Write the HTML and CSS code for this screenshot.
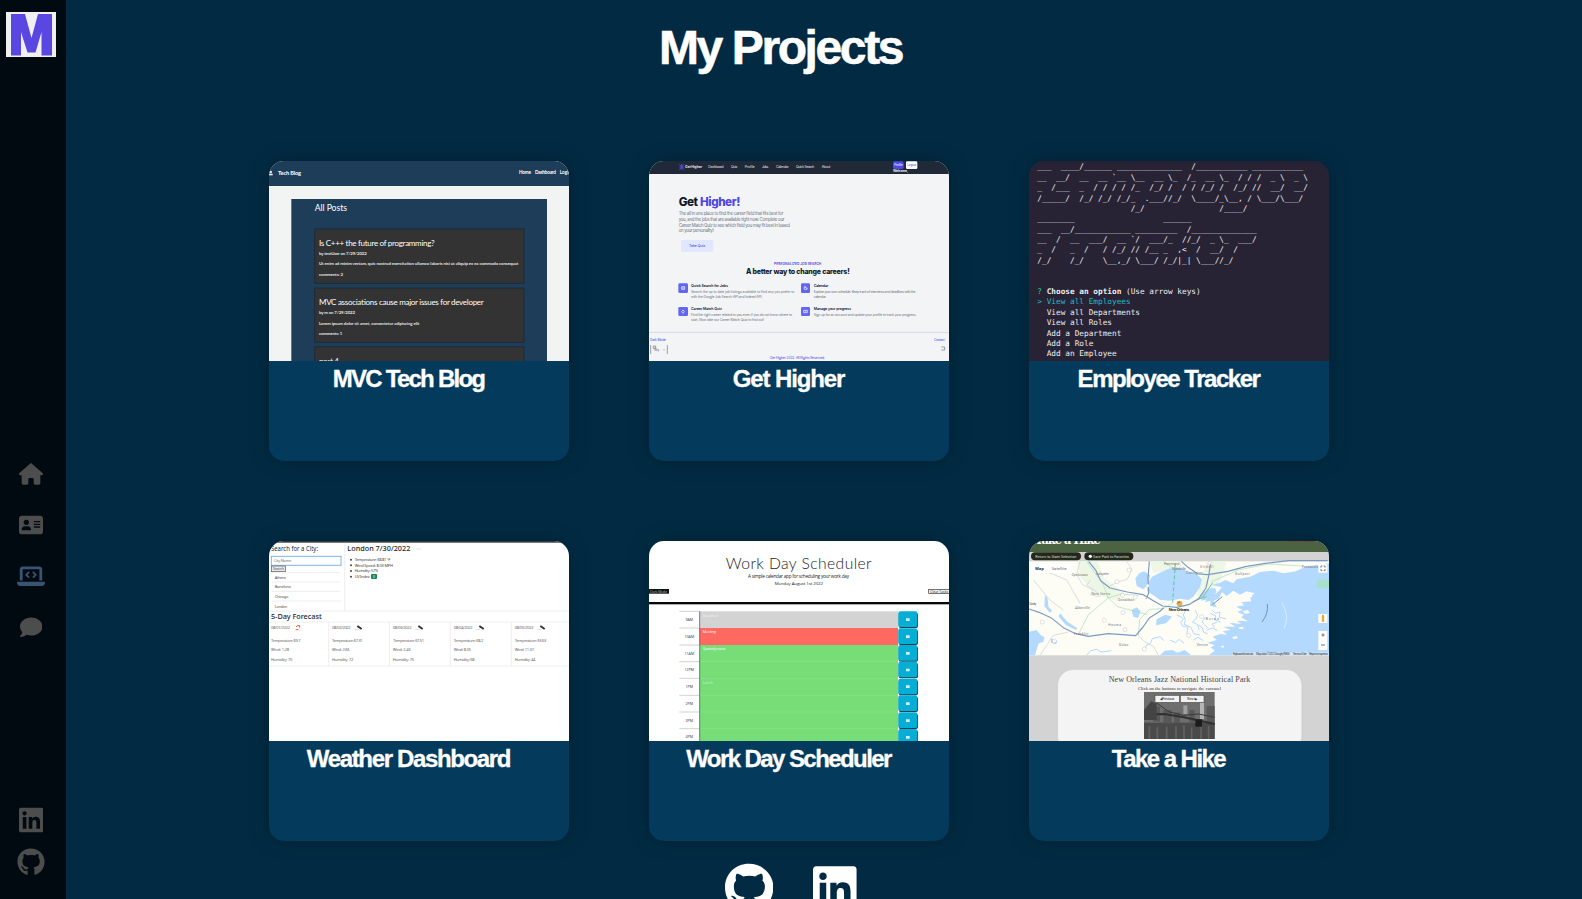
FILE: index.html
```html
<!DOCTYPE html>
<html lang="en">
<head>
<meta charset="utf-8">
<title>My Projects</title>
<link rel="stylesheet" href="styles.css">
</head>
<body>
<svg class="defs" aria-hidden="true">
  <symbol id="github" viewBox="0 0 496 512"><path d="M165.900 397.400c0 2-2.300 3.600-5.200 3.600-3.300.3-5.600-1.300-5.600-3.600 0-2 2.300-3.600 5.200-3.600 3-.3 5.600 1.300 5.600 3.600zm-31.100-4.500c-.7 2 1.300 4.300 4.300 4.900 2.600 1 5.600 0 6.200-2s-1.300-4.300-4.300-5.200c-2.600-.7-5.500.3-6.200 2.300zm44.200-1.700c-2.900.7-4.900 2.600-4.600 4.900.3 2 2.900 3.300 5.900 2.600 2.900-.7 4.900-2.600 4.600-4.600-.3-1.900-3-3.200-5.900-2.900zM244.800 8C106.100 8 0 113.300 0 252c0 110.900 69.800 205.800 169.500 239.200 12.800 2.300 17.300-5.600 17.300-12.100 0-6.200-.3-40.400-.3-61.400 0 0-70 15-84.700-29.800 0 0-11.400-29.100-27.800-36.600 0 0-22.900-15.700 1.600-15.400 0 0 24.900 2 38.600 25.800 21.900 38.600 58.600 27.500 72.900 20.900 2.300-16 8.800-27.100 16-33.700-55.900-6.200-112.300-14.300-112.300-110.500 0-27.500 7.600-41.300 23.600-58.900-2.600-6.500-11.100-33.300 2.600-67.900 20.900-6.500 69 27 69 27 20-5.600 41.500-8.500 62.800-8.500s42.800 2.900 62.800 8.500c0 0 48.100-33.600 69-27 13.700 34.700 5.200 61.400 2.600 67.900 16 17.700 25.800 31.500 25.800 58.900 0 96.500-58.900 104.200-114.800 110.500 9.200 7.900 17 22.900 17 46.400 0 33.700-.3 75.400-.3 83.600 0 6.500 4.600 14.400 17.300 12.100C428.200 457.800 496 362.900 496 252 496 113.300 383.500 8 244.800 8z"/></symbol>
  <symbol id="linkedin" viewBox="0 0 448 512"><path d="M416 32H31.900C14.300 32 0 46.500 0 64.300v383.400C0 465.500 14.300 480 31.900 480H416c17.600 0 32-14.500 32-32.300V64.300c0-17.800-14.400-32.300-32-32.300zM135.400 416H69V202.200h66.500V416zm-33.200-243c-21.300 0-38.500-17.300-38.500-38.500S80.900 96 102.200 96c21.200 0 38.500 17.300 38.500 38.500 0 21.300-17.200 38.500-38.500 38.500zm282.100 243h-66.400V312c0-24.800-.5-56.700-34.500-56.700-34.600 0-39.900 27-39.900 54.900V416h-66.400V202.200h63.700v29.200h.9c8.900-16.800 30.600-34.500 62.900-34.500 67.200 0 79.700 44.300 79.700 101.900V416z"/></symbol>
</svg>

<aside class="sidebar">
  <a class="logo"><svg viewBox="0 0 50 45"><rect width="50" height="45" fill="#f0f0f0"/><path fill="#5a46e0" d="M5 2H19L25.500 26 32 2H46V43.500H35.500V20L29.500 40.500H21.500L15 20V43.500H5z"/></svg></a>
  <nav class="menu">
    <a><svg class="i-home" viewBox="0 0 576 512"><path d="M575.800 255.500c0 18-15 32.100-32 32.100h-32l.7 160.200c0 2.700-.2 5.400-.5 8.100V472c0 22.100-17.900 40-40 40H392c-22.100 0-40-17.900-40-40V384c0-17.700-14.300-32-32-32H256c-17.700 0-32 14.300-32 32v88c0 22.100-17.900 40-40 40H104c-22.100 0-40-17.900-40-40V287.600H32c-18 0-32-14-32-32.100 0-9 3-17 10-24L266.400 8c7-7 15-8 22-8s15 2 21 7L564.800 231.500c8 7 12 15 11 24z"/></svg></a>
    <a><svg class="i-home" viewBox="0 0 576 512"><path fill-rule="evenodd" d="M64 32C28.700 32 0 60.700 0 96V416c0 35.300 28.700 64 64 64H512c35.300 0 64-28.700 64-64V96c0-35.300-28.700-64-64-64H64zm80 256h64c44.200 0 80 35.800 80 80 0 8.800-7.200 16-16 16H80c-8.800 0-16-7.200-16-16 0-44.200 35.800-80 80-80zm-32-96a64 64 0 1 1 128 0 64 64 0 1 1-128 0zm256-32H496a16 16 0 0 1 0 32H368a16 16 0 0 1 0-32zm0 64H496a16 16 0 0 1 0 32H368a16 16 0 0 1 0-32zm0 64H496a16 16 0 0 1 0 32H368a16 16 0 0 1 0-32z"/></svg></a>
    <a class="active"><svg class="i-laptop" viewBox="0 0 640 512"><path d="M64 96c0-35.300 28.700-64 64-64H512c35.300 0 64 28.700 64 64V352H512V96H128V352H64V96zM0 403.200C0 392.600 8.600 384 19.200 384H620.800c10.600 0 19.200 8.600 19.200 19.200 0 42.400-34.400 76.800-76.800 76.800H76.800C34.400 480 0 445.600 0 403.200z"/><path class="chev" d="M265 170l-54 54 54 54M375 170l54 54-54 54"/></svg></a>
    <a><svg class="i-comment" viewBox="0 0 512 512"><path d="M512 240c0 114.900-114.600 208-256 208-37.100 0-72.300-6.400-104.100-17.900C127 448 72 480 16 480c-15 0-20-17-11-27 22-24 40-53 49-84C21 334 0 289 0 240 0 125 114.600 32 256 32s256 93 256 208z"/></svg></a>
  </nav>
  <div class="social">
    <svg class="s-in"><use href="#linkedin"/></svg>
    <svg class="s-gh"><use href="#github"/></svg>
  </div>
</aside>

<main>
  <h1>My Projects</h1>
  <section class="grid">

    <article class="card">
      <svg class="thumb lato" viewBox="27 33 900 600">
        <rect x="27" y="33" width="900" height="600" fill="#f2f3f3"/>
        <rect x="27" y="33" width="900" height="75" fill="#1e3d59"/>
        <g fill="#e6edf2"><circle cx="32" cy="66" r="4"/><rect x="27" y="71" width="11" height="5"/></g>
        <g fill="#fff" font-weight="bold">
          <text x="54" y="76" font-size="17" textLength="69">Tech Blog</text>
          <text x="777" y="72" font-size="14" textLength="36">Home</text>
          <text x="825" y="72" font-size="14" textLength="63">Dashboard</text>
          <text x="899" y="72" font-size="14" textLength="34">Login</text>
        </g>
        <rect x="94" y="147" width="767" height="500" fill="#1e3d59"/>
        <g class="post"><rect x="164" y="237" width="628" height="163"/><rect x="164" y="414" width="628" height="163"/><rect x="164" y="590" width="628" height="80"/></g>
        <g fill="#fff">
          <text x="164" y="183" font-size="26" textLength="97">All Posts</text>
          <text x="177" y="287" font-size="24" textLength="347">Is C+++ the future of programming?</text>
          <text x="177" y="464" font-size="24" textLength="494">MVC associations cause major issues for developer</text>
          <text x="177" y="642" font-size="24" textLength="60">post 4</text>
          <g font-size="13" font-weight="bold" fill="#e4e4e4">
            <text x="177" y="315" textLength="143">by testUser on 7/29/2022</text>
            <text x="177" y="346" textLength="598">Ut enim ad minim veniam, quis nostrud exercitation ullamco laboris nisi ut aliquip ex ea commodo consequat</text>
            <text x="177" y="378" textLength="72">comments: 2</text>
            <text x="177" y="492" textLength="108">by m on 7/29/2022</text>
            <text x="177" y="524" textLength="301">Lorem ipsum dolor sit amet, consectetur adipiscing elit</text>
            <text x="177" y="555" textLength="70">comments: 1</text>
          </g>
        </g>
      </svg>
      <h2 class="t-mvc">MVC Tech Blog</h2>
    </article>

    <article class="card">
      <svg class="thumb inter" viewBox="27 33 900 600">
        <rect x="27" y="33" width="900" height="600" fill="#f3f4f6"/>
        <rect x="27" y="33" width="900" height="39" fill="#1f2937"/>
        <path d="M118 43l14 16M132 43l-14 16M118 51h14M125 42v18" stroke="#4f46e5" stroke-width="3"/>
        <g fill="#e5e7eb" font-size="10">
          <text x="135" y="55" font-weight="bold" textLength="51">Get Higher</text>
          <text x="205" y="54" textLength="46">Dashboard</text><text x="273" y="54" textLength="19">Quiz</text><text x="314" y="54" textLength="30">Profile</text><text x="366" y="54" textLength="19">Jobs</text><text x="408" y="54" textLength="38">Calendar</text><text x="468" y="54" textLength="55">Quick Search</text><text x="545" y="54" textLength="26">About</text>
          <text x="759" y="67" font-weight="bold" textLength="45">Welcome,</text>
        </g>
        <rect x="759" y="34" width="32" height="23" rx="5" fill="#4f46e5"/><rect x="798" y="34" width="34" height="23" rx="4" fill="#fff"/>
        <text x="763" y="48" font-size="9" fill="#fff" textLength="25">Profile</text><text x="802" y="48" font-size="9" fill="#4f46e5" textLength="27">Logout</text>
        <g font-weight="800" font-size="35"><text x="116" y="168" fill="#111827" textLength="58">Get</text><text x="180" y="168" fill="#4f46e5" textLength="121">Higher!</text></g>
        <g font-size="13" fill="#6b7280">
          <text x="116" y="196" textLength="314">The all in one place to find the career field that fits best for</text>
          <text x="116" y="213" textLength="317">you, and the jobs that are available right now. Complete our</text>
          <text x="116" y="230" textLength="334">Career Match Quiz to see which field you may fit best in based</text>
          <text x="116" y="246" textLength="105">on your personality!</text>
        </g>
        <rect x="123" y="270" width="97" height="36" rx="4" fill="#e0e7ff"/>
        <text x="147" y="291" font-size="11" fill="#4338ca" textLength="49">Take Quiz</text>
        <text x="402" y="344" font-size="10" font-weight="600" fill="#4f46e5" textLength="142">PERSONALIZED JOB SEARCH</text>
        <text x="318" y="372" font-size="21" font-weight="800" fill="#111827" textLength="311">A better way to change careers!</text>
        <g fill="#6366f1"><rect x="115" y="400" width="29" height="29" rx="4"/><rect x="483" y="400" width="27" height="29" rx="4"/><rect x="115" y="471" width="29" height="27" rx="4"/><rect x="483" y="471" width="27" height="27" rx="4"/></g>
        <g fill="none" stroke="#fff" stroke-width="2"><path d="M125 410h9v8h-9zM125 414h9M502 414a5 5 0 1 1-5-5M497 410v4h5M125 485l4-5 4 5-4 5zM491 481h11v7h-11zM495 484h4"/></g>
        <g font-size="11" font-weight="600" fill="#1f2937">
          <text x="153" y="410" textLength="111">Quick Search for Jobs</text><text x="521" y="410" textLength="44">Calendar</text>
          <text x="153" y="481" textLength="93">Career Match Quiz</text><text x="521" y="481" textLength="112">Manage your progress</text>
        </g>
        <g font-size="10" fill="#6b7280">
          <text x="153" y="429" textLength="310">Search the up to date job listings available to find any you prefer to</text>
          <text x="153" y="443" textLength="214">with the Google Job Search API and Indeed API.</text>
          <text x="521" y="429" textLength="305">Explore your own schedule. Keep track of interviews and deadlines with the</text>
          <text x="521" y="443" textLength="38">calendar.</text>
          <text x="153" y="499" textLength="303">Find the right career related to you even if you do not know where to</text>
          <text x="153" y="513" textLength="219">start. Now take our Career Match Quiz to find out!</text>
          <text x="521" y="499" textLength="308">Sign up for an account and update your profile to track your progress.</text>
        </g>
        <path d="M27 547h900" stroke="#d6d9df" stroke-width="3"/>
        <g font-size="10" fill="#4f46e5"><text x="30" y="573" textLength="48">Dark Mode</text><text x="882" y="573" textLength="32">Contact</text><text x="390" y="628" textLength="165">Get Higher 2022. All Rights Reserved.</text></g>
        <path d="M32 585v27M82 585v27M40 588h7v7h-7zM904 591h10v9h-10" fill="none" stroke="#6b7280" stroke-width="2"/>
        <text x="42" y="603" font-size="9" fill="#4b5563">Sky</text><path d="M69 598l3 3 3-3" stroke="#4b5563" fill="none"/>
      </svg>
      <h2 class="t-get">Get Higher</h2>
    </article>

    <article class="card">
      <svg class="thumb mono" viewBox="27 33 900 600">
        <rect x="27" y="33" width="900" height="600" fill="#272334"/>
        <g class="ascii">
          <text x="52" y="57">___  ____/______ ______________  /___________ ___________</text>
          <text x="52" y="89">__  __/  __  __ `__ \__  __ \_  /_  __ \_  / / /  _ \  _ \</text>
          <text x="52" y="120">_  /___  _  / / / / /_  /_/ /  / / /_/ /  /_/ //  __/  __/</text>
          <text x="52" y="152">/_____/  /_/ /_/ /_/_  .___//_/  \____/_\__, / \___/\___/</text>
          <text x="52" y="183">                    /_/                /____/</text>
          <text x="52" y="213">________                   ______</text>
          <text x="52" y="245">___  __/____________ _________  /______________</text>
          <text x="52" y="276">__  /  __  ___/  __ `/  ___/_  //_/  _ \_  ___/</text>
          <text x="52" y="307">_  /   _  /   / /_/ // /__ _  ,&lt;  /  __/  /</text>
          <text x="52" y="339">/_/    /_/    \__,_/ \___/ /_/|_| \___//_/</text>
        </g>
        <g class="menu-text">
          <text x="52" y="432" fill="#23d18b">?</text><text x="80" y="432" font-weight="bold">Choose an option</text><text x="318" y="432">(Use arrow keys)</text>
          <text x="52" y="463" fill="#22b8c4">&gt; View all Employees</text>
          <text x="80" y="494">View all Departments</text>
          <text x="80" y="526">View all Roles</text>
          <text x="80" y="557">Add a Department</text>
          <text x="80" y="588">Add a Role</text>
          <text x="80" y="619">Add an Employee</text>
        </g>
      </svg>
      <h2 class="t-emp">Employee Tracker</h2>
    </article>

    <article class="card">
      <svg class="thumb noto" viewBox="27 33 900 600">
        <rect x="27" y="33" width="900" height="600" fill="#fff"/>
        <rect x="27" y="33" width="900" height="5" fill="#343a40"/>
        <g fill="#212529" font-size="22"><text x="33" y="62" textLength="141" lengthAdjust="spacingAndGlyphs">Search for a City:</text><text x="262" y="62" font-weight="500" textLength="189" lengthAdjust="spacingAndGlyphs">London 7/30/2022</text><text x="33" y="266" font-weight="500" textLength="152" lengthAdjust="spacingAndGlyphs">5-Day Forecast</text></g>
        <rect x="34" y="79" width="209" height="27" fill="#fff" stroke="#7db4f5" stroke-width="3"/>
        <text x="42" y="97" font-size="12" fill="#6c757d" textLength="52">City Name</text>
        <rect x="34" y="108" width="42" height="17" fill="#e9e9ed" stroke="#555" stroke-width="2"/><text x="39" y="121" font-size="11" fill="#555" textLength="33">Search</text>
        <g stroke="#e3e5e8" stroke-width="2" fill="none"><path d="M34 128h208M34 156h208M34 184h208M34 213h208M27 243h900M254 38v205M27 276h900M27 408h900M206 276v132M388 276v132M571 276v132M754 276v132"/></g>
        <g font-size="12" fill="#555"><text x="44" y="147" textLength="34">Athens</text><text x="44" y="175" textLength="49">Barcelona</text><text x="44" y="204" textLength="41">Chicago</text><text x="44" y="234" textLength="38">London</text></g>
        <g font-size="12" fill="#444"><circle cx="273" cy="89" r="3"/><circle cx="273" cy="106" r="3"/><circle cx="273" cy="123" r="3"/><circle cx="273" cy="140" r="3"/>
          <text x="284" y="93" textLength="107">Temperature: 68.81 °F</text><text x="284" y="110" textLength="115">Wind Speed: 8.03 MPH</text><text x="284" y="127" textLength="71">Humidity: 57%</text><text x="284" y="144" textLength="46">UV Index:</text></g>
        <rect x="333" y="132" width="18" height="15" rx="3" fill="#198754"/><text x="339" y="144" font-size="10" fill="#fff">0</text>
        <path d="M468 57q4-6 9-2 7-2 7 4h-16z" fill="#eee"/>
        <g font-size="12" fill="#666">
          <text x="33" y="297" textLength="57">08/01/2022</text><text x="216" y="297" textLength="56">08/02/2022</text><text x="398" y="297" textLength="57">08/03/2022</text><text x="581" y="297" textLength="57">08/04/2022</text><text x="764" y="297" textLength="57">08/05/2022</text>
          <text x="33" y="336" textLength="89">Temperature: 69.7</text><text x="216" y="336" textLength="92">Temperature: 67.31</text><text x="400" y="336" textLength="92">Temperature: 67.51</text><text x="581" y="336" textLength="89">Temperature: 68.2</text><text x="764" y="336" textLength="95">Temperature: 63.63</text>
          <text x="33" y="364" textLength="54">Wind: 1.28</text><text x="216" y="364" textLength="53">Wind: 2.66</text><text x="398" y="364" textLength="54">Wind: 2.43</text><text x="581" y="364" textLength="52">Wind: 8.05</text><text x="764" y="364" textLength="58">Wind: 11.07</text>
          <text x="33" y="392" textLength="64">Humidity: 70</text><text x="216" y="392" textLength="64">Humidity: 72</text><text x="398" y="392" textLength="64">Humidity: 75</text><text x="581" y="392" textLength="63">Humidity: 68</text><text x="764" y="392" textLength="62">Humidity: 44</text>
        </g>
        <path d="M108 291q3-6 11-4v6M107 299h8" stroke="#e4572e" stroke-width="3" fill="none"/>
        <g stroke="#333" stroke-width="6"><path d="M292 288l13 9M475 288l13 9M658 288l13 9M841 288l13 9"/></g>
        <g stroke="#ddd" stroke-width="3"><path d="M283 298h12M466 298h12M649 298h12M832 298h12"/></g>
      </svg>
      <h2 class="t-wea">Weather Dashboard</h2>
    </article>

    <article class="card">
      <svg class="thumb sans" viewBox="27 33 900 600">
        <rect x="27" y="33" width="900" height="600" fill="#fff"/>
        <text class="light" x="257" y="116" font-size="47" fill="#222" textLength="438">Work Day Scheduler</text>
        <text x="324" y="143" font-size="14" fill="#222" textLength="303">A simple calendar app for scheduling your work day</text>
        <text x="404" y="165" font-size="13" fill="#222" textLength="145">Monday August 1st 2022</text>
        <rect x="27" y="177" width="60" height="14" fill="#111"/><text x="30" y="188" font-size="10" fill="#bbb" textLength="51">Dark Mode</text>
        <rect x="866" y="178" width="66" height="12" fill="#eee" stroke="#333" stroke-width="2"/><text x="871" y="188" font-size="10" fill="#333" textLength="53">Clear Tasks</text>
        <rect x="27" y="216" width="900" height="7" fill="#080808"/>
        <rect x="179" y="244" width="595" height="50" fill="#d3d3d3"/><rect x="179" y="294" width="595" height="51" fill="#ff6961"/><rect x="179" y="345" width="595" height="290" fill="#77dd77"/>
        <path d="M179 395h595M179 445h595M179 496h595M179 546h595M179 596h595" stroke="#8fdf8f" stroke-width="2"/>
        <path d="M118 244h61M118 294h61M118 345h61M118 395h61M118 445h61M118 496h61M118 546h61M118 596h61" stroke="#bbb" stroke-width="2"/>
        <path d="M179 244v389" stroke="#444" stroke-width="2"/>
        <g class="save-shadow"><rect x="776" y="248" width="58" height="46" rx="6"/><rect x="776" y="299" width="58" height="46" rx="6"/><rect x="776" y="349" width="58" height="46" rx="6"/><rect x="776" y="399" width="58" height="46" rx="6"/><rect x="776" y="450" width="58" height="46" rx="6"/><rect x="776" y="500" width="58" height="46" rx="6"/><rect x="776" y="551" width="58" height="46" rx="6"/><rect x="776" y="601" width="58" height="46" rx="6"/></g>
        <g class="save"><rect x="775" y="244" width="57" height="47" rx="6"/><rect x="775" y="295" width="57" height="47" rx="6"/><rect x="775" y="345" width="57" height="47" rx="6"/><rect x="775" y="395" width="57" height="47" rx="6"/><rect x="775" y="446" width="57" height="47" rx="6"/><rect x="775" y="496" width="57" height="47" rx="6"/><rect x="775" y="547" width="57" height="47" rx="6"/><rect x="775" y="597" width="57" height="47" rx="6"/></g>
        <path d="M798 269h11M798 320h11M798 370h11M798 420h11M798 470h11M798 521h11M798 572h11M798 622h11" stroke="#d4f2f8" stroke-width="8"/>
        <g font-size="11" fill="#333" text-anchor="middle"><text x="148" y="273">9AM</text><text x="148" y="323">10AM</text><text x="148" y="374">11AM</text><text x="148" y="424">12PM</text><text x="148" y="474">1PM</text><text x="148" y="525">2PM</text><text x="148" y="575">3PM</text><text x="148" y="625">4PM</text></g>
        <g font-size="11" fill="#fff"><text x="188" y="260" textLength="46" opacity=".7">Breakfast</text><text x="188" y="310" textLength="40">Meeting</text><text x="188" y="360" textLength="68">Quarterly review</text><text x="188" y="461" textLength="31" opacity=".6">Lunch</text></g>
      </svg>
      <h2 class="t-wor">Work Day Scheduler</h2>
    </article>

    <article class="card">
      <svg class="thumb serif" viewBox="27 33 900 600">
        <rect x="27" y="33" width="900" height="600" fill="#d3d3d3"/>
        <rect x="27" y="33" width="900" height="33" fill="#4b6340"/>
        <path d="M805 33h78" stroke="#9a2f2f" stroke-width="3"/>
        <text class="brand" x="45" y="41" font-size="34" font-weight="bold" fill="#fff" textLength="197">Take a Hike</text>
        <g fill="#20291a"><rect x="33" y="67" width="150" height="24" rx="12"/><rect x="193" y="67" width="147" height="24" rx="12"/></g>
        <g class="ui" font-size="11" fill="#ddd"><text x="46" y="83" textLength="123">Return to State Selection</text><text x="219" y="83" textLength="108">Save Park to Favorites</text></g><circle cx="211" cy="79" r="5" fill="#fff"/>
        <!-- coastline map -->
        <rect x="27" y="94" width="900" height="282" fill="#fdfdf5"/>
        <path fill="#eef7e6" d="M172 94h60l20 50 60 45-20 25-60-20-50-50zM390 94h90l10 20-90 16zM560 94h60l-20 60-50 50-20-10z"/>
        <path fill="#b3d9ff" d="M382 184L384 160 396 140 420 128 445 116 470 112 500 122 530 132 546 148 540 172 520 200 505 210 480 206 450 212 420 210 400 196zM346 145L358 130 372 124 390 136 386 160 370 178 350 168zM540 196l25-20 20-2 5 12-20 20-25 6zM27 305L50 300 62 316 74 322 70 336 56 340 45 376H27zM420 376l14-14 24-2 14 8 22-8 20 16zM335 240l15-8 12 12-8 20-14-4zM75 195l8 10 2 25 12 12-8 6-16-20zM120 250l22 25 30 20-4 5-30-15-22-25zM92 325l20 8-4 10-15-5zM410 268l26-14 20 6-18 20-30 6z"/>
        <path fill="#b3d9ff" d="M575 165L600 158 616 150 640 160 650 148 690 140 720 126 760 122 790 130 828 124 860 108 890 106 927 100V376H566L584 362 572 352 584 346 562 338 590 330 578 320 600 312 622 314 608 304 632 300 610 290 646 290 628 278 664 282 650 272 684 274 664 262 672 254 650 246 668 240 648 230 672 226 664 216 694 214 690 200 704 190 680 184 660 194 640 182 620 198 606 186 596 206 580 212 590 232 570 228 572 212 555 216 565 200 590 190 606 172z"/>
        <g fill="#fdfdf5"><path d="M604 218l12-10 4 12 16-6-4 16 20-2-10 14 16 6-22 4 8 12-24-2-6 14-12-8-8 12-8-18zM660 208l12-12 20-4 6 8-16 6-10 10zM668 244l14-4 8 8-14 4zM660 290l12 2-4 6-12-2zM600 350l10-4 2 8zM636 322l14-4 4 6-12 4z"/></g>
        <g fill="none" stroke="#b3d9ff" stroke-width="3" stroke-linejoin="bevel"><path d="M470 255l14 6 6 6-8 10 6 12 16 2-4 20M525 240l8 14-4 12-12 10 16 8 4 16M556 262l-10 14 8 8 10 10M375 360l4-14 12-6 6-14 24-6 10 12M200 376l12-14 18-4 14 8 30-4M535 285l12 8 4 14 12 4M500 235l-10 20 6 16-4 12 20 8 10 20 18 4M570 250l18 8-6 10 20 8M560 300l18-6 14 8M450 330l16 8 12-10 14 12M520 330l14-8 16 10M576 240l10 10 14-4-2 16 20 4M592 276l-16 6 8 10"/></g>
        <g fill="none" stroke="#a5dcb9" stroke-width="2"><path d="M200 94l50 70 15 40-60 50-30 60M430 94l34 25M575 155l80-35 90-18 100 6M355 318l4-50 30-30 42-2 25-16M262 200l30 30 90 24M264 204l40-12 50 4"/></g>
        <path d="M466 100l-8 118" stroke="#63c69a" stroke-width="3" stroke-dasharray="12 6"/>
        <path fill="none" stroke="#74c79b" stroke-width="3" d="M578 158l-30 44-30 14M560 200l-30 8"/>
        <g fill="none" stroke="#7b9bc4" stroke-width="3.500" stroke-linejoin="round"><path d="M206 94l22 28 14 30 28 22 52 12 48 8 30 18 28 16 42 4 36-8 30-18 22-32 8-36 6-40M484 94l20 18 30 20 30 2 60-10 52-14 60-10 70-8h117M27 237l30 10 36 16 40 32 34 16 38 8 60-8 82 6 22-26 20-28 32-20 10-10M388 94l-4 50 2 46-8 16"/></g>
        <g fill="none" stroke="#c6ced5" stroke-width="2"><path d="M180 94l-10 40 18 30 30 16-6 14 24 6M40 150l50 60 40 30M212 150l-12 16 24 14 16 20M60 376l40-60 45-10M70 120l70 30 40 70M320 94l16 24-14 30-30 8-26 14M355 318l20 18 26 14 14 26"/></g>
        <g fill="none" stroke="#6c93c0" stroke-width="3"><path d="M577 224l30-24M742 222q4 28-16 54"/><path d="M786 218q24 40 6 78" stroke="#d9ecff"/></g>
        <g class="ui" font-size="10" fill="#777"><text x="155" y="139" textLength="48">Opelousas</text><text x="228" y="136" textLength="38">Lafayette</text><text x="165" y="237" textLength="44">Abbeville</text><text x="215" y="196" textLength="55">New Iberia</text><text x="27" y="224" textLength="22">Crowley</text><text x="432" y="104" textLength="46">Hammond</text><text x="540" y="114" textLength="40">Slidell</text><text x="498" y="132" textLength="50">Covington</text><text x="645" y="134" textLength="44">Gulfport</text><text x="265" y="287" textLength="38">Houma</text><text x="162" y="316" textLength="43">Franklin</text><text x="297" y="347" textLength="28">Dulac</text><text x="557" y="270" textLength="40">Buras</text><text x="530" y="348" textLength="34">Venice</text><text x="295" y="213" textLength="48">Donaldson</text><text x="845" y="114" textLength="50">Pensacola</text><text x="457" y="119" textLength="40">Mandeville</text></g>
        <g fill="#fff" stroke="#aaa"><circle cx="327" cy="120" r="6"/><circle cx="291" cy="155" r="6"/><circle cx="383" cy="167" r="5"/><circle cx="569" cy="99" r="5"/><circle cx="253" cy="271" r="6"/><circle cx="309" cy="248" r="6"/><circle cx="67" cy="276" r="6"/><circle cx="103" cy="333" r="6"/><circle cx="315" cy="299" r="6"/><circle cx="373" cy="357" r="6"/><circle cx="506" cy="316" r="6"/><circle cx="308" cy="196" r="6"/><circle cx="346" cy="201" r="6"/><circle cx="545" cy="260" r="6"/></g>
        <rect x="890" y="148" width="37" height="26" fill="#a9e0cd"/>
        <text class="ui" x="446" y="242" font-size="13" font-weight="bold" fill="#333" textLength="62">New Orleans</text>
        <rect x="470" y="213" width="17" height="15" rx="5" fill="#e4b04a"/><path d="M473 220l7-5" stroke="#b74c2b" stroke-width="3"/>
        <rect x="34" y="101" width="118" height="27" fill="#fff"/><g class="ui" font-size="12"><text x="46" y="119" font-weight="bold" fill="#222" textLength="25">Map</text><text x="95" y="119" fill="#666" textLength="45">Satellite</text></g>
        <g fill="#fff"><rect x="895" y="101" width="27" height="27"/><rect x="895" y="252" width="27" height="27"/><rect x="895" y="303" width="27" height="57"/></g>
        <path d="M903 113v-5h4M911 108h4v5M915 117v5h-4M907 122h-4v-5M903 345h12M904 315h10M909 310v10" fill="none" stroke="#777" stroke-width="3"/><path d="M909 258v15" stroke="#f0ac27" stroke-width="7" stroke-linecap="round"/>
        <rect x="636" y="367" width="291" height="9" fill="#e4edf3" opacity=".7"/><g class="ui" font-size="9" fill="#444"><text x="638" y="375" textLength="62">Keyboard shortcuts</text><text x="708" y="375" textLength="101">Map data ©2022 Google, INEGI</text><text x="818" y="375" textLength="42">Terms of Use</text><text x="867" y="375" textLength="57">Report a map error</text></g>
        <rect x="112" y="418" width="734" height="250" rx="48" fill="#f4f4f4" stroke="#c5c5c5" stroke-width="2"/>
        <text x="266" y="457" font-size="24" fill="#444" textLength="425">New Orleans Jazz National Historical Park</text>
        <text x="354" y="480" font-size="13" fill="#222" textLength="249">Click on the buttons to navigate the carousel</text>
        <!-- bridge photo -->
        <rect x="372" y="486" width="212" height="141" fill="#6e6e6e"/>
        <rect x="372" y="578" width="212" height="49" fill="#4b4b4b"/>
        <g fill="#585858"><rect x="400" y="530" width="20" height="45"/><rect x="430" y="540" width="25" height="40"/><rect x="462" y="548" width="18" height="30"/><rect x="508" y="540" width="16" height="40"/><rect x="560" y="528" width="24" height="50"/></g>
        <rect x="540" y="517" width="12" height="50" fill="#b5b5b5"/><rect x="490" y="526" width="12" height="26" fill="#a0a0a0"/>
        <path d="M372 554l60-2 60 10 92 20" fill="none" stroke="#303030" stroke-width="6"/><path d="M376 550L408 518 448 546 492 556 536 552 584 562" fill="none" stroke="#3a3a3a" stroke-width="3"/><path d="M372 540L394 514 410 522V570H372z" fill="#444"/><rect x="526" y="568" width="20" height="22" fill="#1c1c1c"/>
        <g stroke="#7b7b7b" stroke-width="5" opacity=".5"><path d="M388 588v39M412 592v35M440 590v37M468 588v39M492 586v41M515 592v35M543 590v37M566 588v39"/></g>
        <rect x="405" y="496" width="73" height="21" fill="#f1f1f1" stroke="#555" stroke-width="2"/><rect x="481" y="496" width="71" height="21" fill="#f1f1f1" stroke="#555" stroke-width="2"/>
        <g class="ui" font-size="10" fill="#222"><text x="420" y="510" textLength="43">◀Previous</text><text x="502" y="510" textLength="29">Next▶</text></g>
      </svg>
      <h2 class="t-tak">Take a Hike</h2>
    </article>
  </section>

  <footer>
    <svg class="f-gh"><use href="#github"/></svg>
    <svg class="f-in"><use href="#linkedin"/></svg>
  </footer>
</main>
</body>
</html>
```
FILE: styles.css
```css
* { box-sizing: border-box; }
body {
  margin: 0;
  height: 899px;
  display: flex;
  overflow: hidden;
  background: #022b43;
  font-family: "Liberation Sans", Arial, sans-serif;
  color: #fff;
}
.defs { display: none; }
svg { display: block; }

.sidebar {
  flex: none;
  width: 66px;
  height: 899px;
  background: #010a11;
  padding: 12px 4px 23px 0;
  display: flex;
  flex-direction: column;
  align-items: center;
  fill: #4d4d4e;
}
.logo svg { width: 50px; height: 45px; }
.menu { margin-top: 392px; display: flex; flex-direction: column; }
.menu a { height: 51px; display: flex; align-items: center; justify-content: center; }
.i-home { width: 24px; height: 22px; margin-bottom: 2px; }
.i-laptop { width: 28px; height: 22.400px; }
.i-comment { width: 22.400px; height: 22.400px; }
.active { fill: #385472; }
.chev { fill: none; stroke: #385472; stroke-width: 42; stroke-linecap: round; stroke-linejoin: round; }
.social { margin-top: auto; display: flex; flex-direction: column; align-items: center; gap: 14px; }
.s-in { width: 24.500px; height: 28px; }
.s-gh { width: 28px; height: 28px; }

main {
  flex: 1;
  padding: 18px 50px 0 0;
  display: flex;
  flex-direction: column;
  align-items: center;
}
h1 {
  margin: 0 0 83px;
  padding-right: 37px;
  font-size: 48px;
  line-height: 60px;
  letter-spacing: -2.400px;
  -webkit-text-stroke: .6px #fff;
}
.grid { display: grid; grid-template-columns: repeat(3, 300px); gap: 80px; }
.card {
  height: 300px;
  border-radius: 15px;
  overflow: hidden;
  background: #043b5c;
  box-shadow: 0 0 20px rgba(0, 0, 0, .25);
}
.thumb { width: 300px; height: 200px; }
h2 {
  margin: 0;
  padding-right: 21px;
  font-size: 24px;
  line-height: 36px;
  text-align: center;
  white-space: nowrap;
  -webkit-text-stroke: .3px #fff;
}
.t-mvc { letter-spacing: -1.750px; }
.t-get { letter-spacing: -1.100px; }
.t-emp { letter-spacing: -1.480px; }
.t-wea { letter-spacing: -1.350px; }
.t-wor { letter-spacing: -1.580px; }
.t-tak { letter-spacing: -1.550px; }

footer { margin-top: 22px; padding-right: 16px; display: flex; gap: 40px; fill: #fff; }
.f-gh { width: 48.400px; height: 50px; }
.f-in { width: 43.750px; height: 50px; }

.lato { font-family: Lato, sans-serif; }
.inter { font-family: Inter, sans-serif; }
.mono { font-family: "DejaVu Sans Mono", monospace; }
.noto { font-family: "Noto Sans", sans-serif; }
.sans { font-family: "Open Sans", sans-serif; }
.serif { font-family: "Liberation Serif", serif; }
.light { font-family: Lato, sans-serif; font-weight: 300; }
.brand { font-family: "DejaVu Serif", serif; }
.ui { font-family: Roboto, sans-serif; }
.post rect { fill: #333; stroke: #1a2c3d; stroke-width: 3; }
.ascii text { font-family: "DejaVu Sans Mono", monospace; font-size: 23.300px; fill: #f4f4f6; white-space: pre; }
.menu-text { font-size: 23.300px; fill: #eee; }
.save rect { fill: #06aed5; }
.save-shadow rect { fill: #15414f; }
```
